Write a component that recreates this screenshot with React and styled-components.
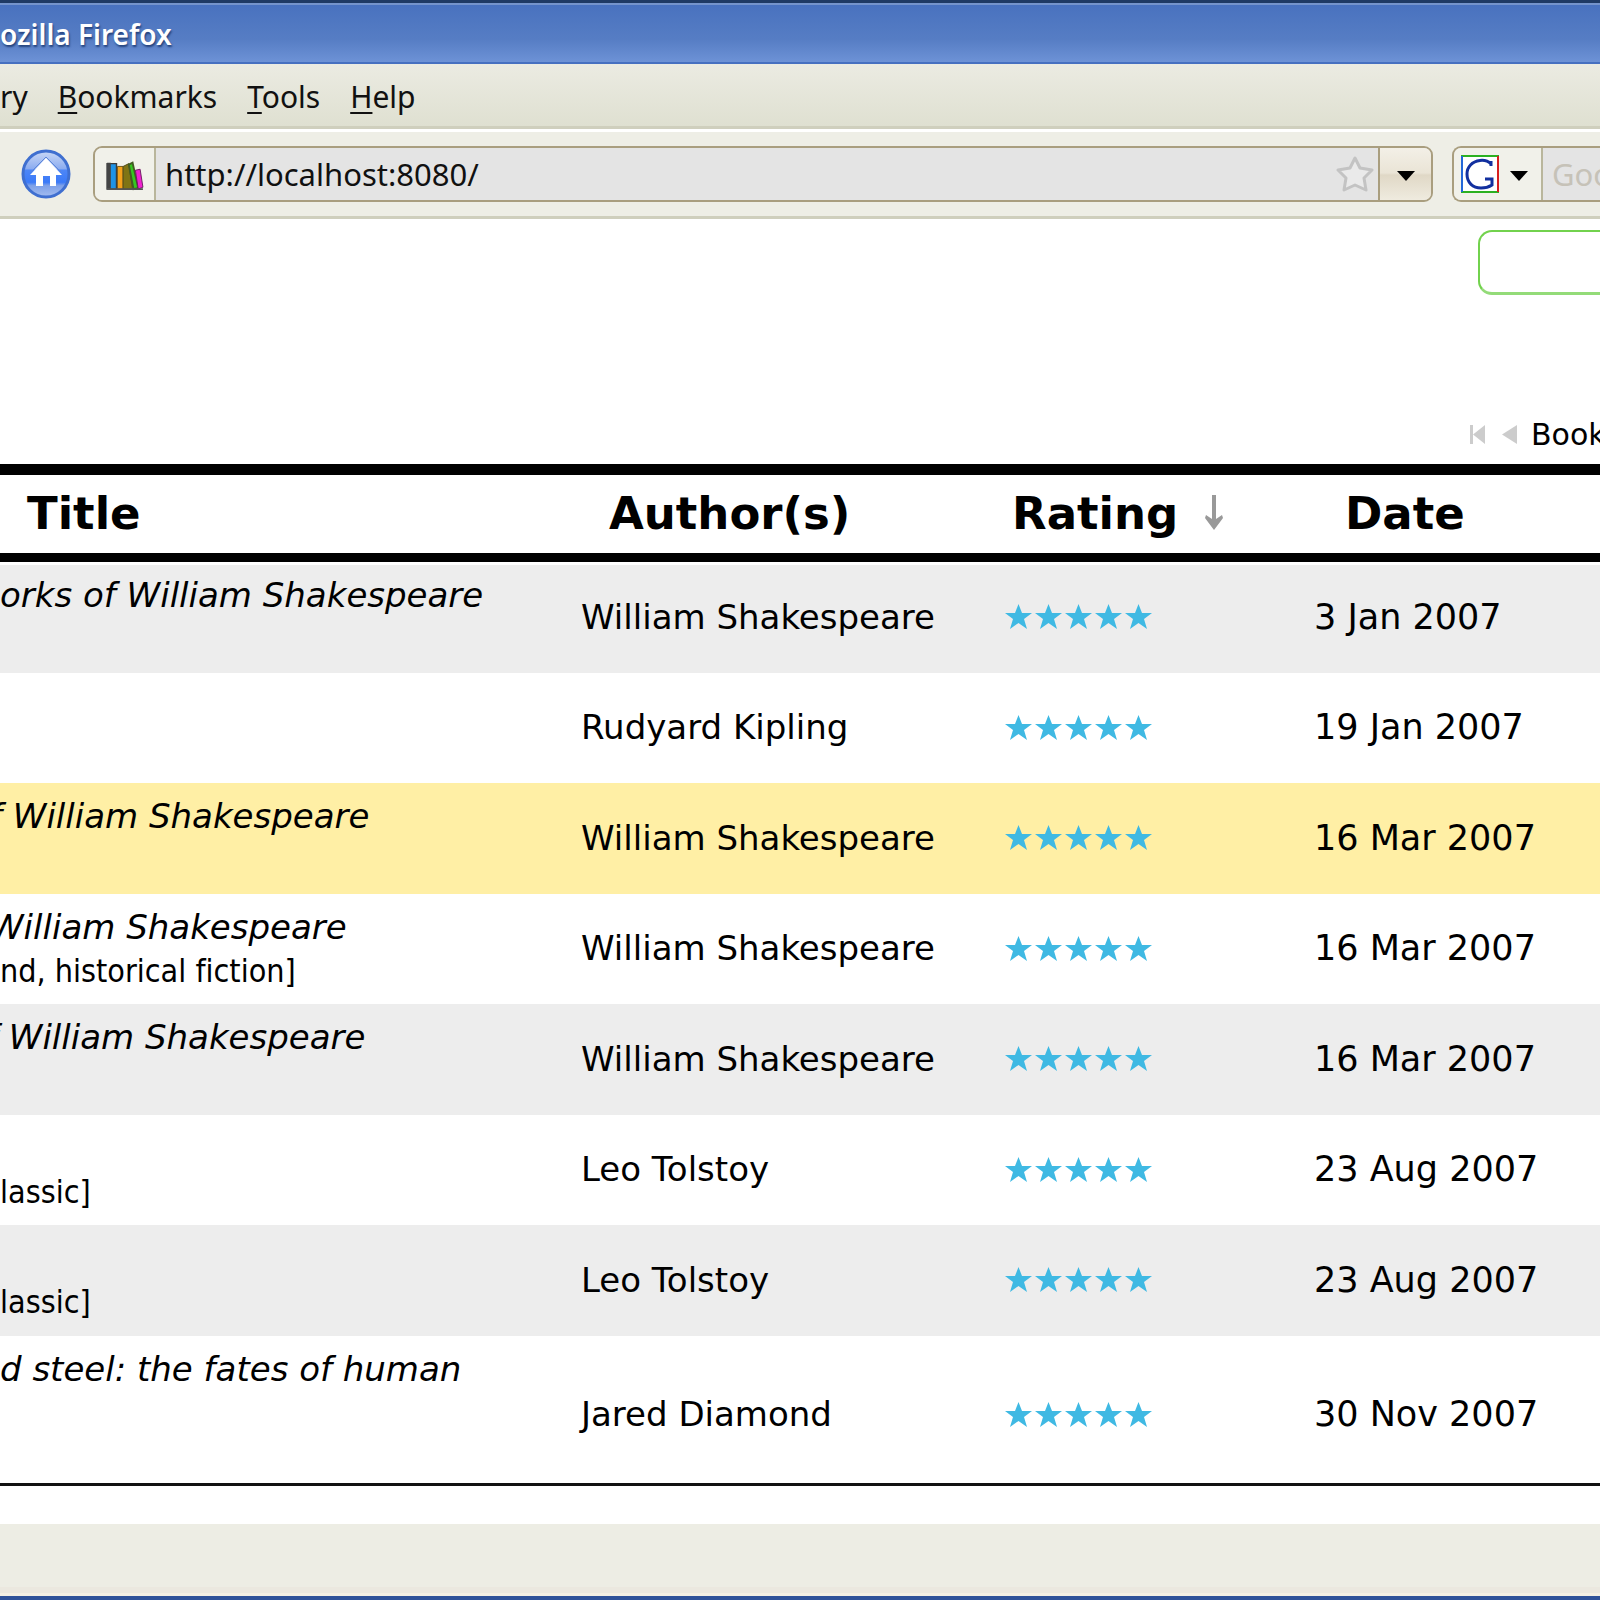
import React from 'react';
import styled, { createGlobalStyle } from 'styled-components';

const chromeFont = '"Noto Sans", "Open Sans", sans-serif';
const pageFont = '"DejaVu Sans", sans-serif';

//css
const GlobalStyle = createGlobalStyle`
    * { box-sizing: border-box; }
    body { margin: 0; background: #fff; }
    button {
        font: inherit;
        color: inherit;
        background: none;
        border: none;
        padding: 0;
        cursor: pointer;
    }
`;
const Window = styled.div`
    display: flex;
    flex-direction: column;
    min-height: 100vh;
    overflow: hidden;
    border-top: 3px solid #1f3a64;
    font-family: ${chromeFont};
    font-variant-ligatures: none;
    color: #111;
`;
const TitleBar = styled.header`
    display: flex;
    align-items: center;
    height: 61px;
    border-top: 2px solid #7594cb;
    border-bottom: 2px solid #4670c0;
    background: linear-gradient(#4972bf, #567dc4 60%, #6d92d6);
    color: #fff;
    font-size: 28px;
    font-weight: 600;
    white-space: nowrap;
    text-shadow: 1px 2px 2px #24427c;
`;
const MenuBar = styled.nav`
    display: flex;
    align-items: center;
    gap: 30px;
    height: 65px;
    padding-top: 4px;
    border-bottom: 3px solid #cfcfbd;
    background: linear-gradient(#ebebe2, #dfe0d1);
    font-size: 30px;
    line-height: 40px;
    u {
        text-decoration-thickness: 2px;
        text-underline-offset: 4px;
    }
`;
const Toolbar = styled.div`
    display: flex;
    align-items: center;
    height: 90px;
    border-top: 3px solid #fff;
    border-bottom: 3px solid #cfcfbd;
    background: #eeeee6;
`;
const HomeButton = styled.button`
    display: flex;
    margin: 0 22px 0 21px;
`;
const Field = styled.div`
    display: flex;
    flex: ${props => props.$grow ? "1 1 0" : "0 0 148px"};
    min-width: 0;
    height: 56px;
    margin-right: ${props => props.$grow ? 19 : 0}px;
    border: 2px solid #a99e7f;
    border-right-width: ${props => props.$grow ? 2 : 0}px;
    border-radius: ${props => props.$grow ? "9px" : "9px 0 0 9px"};
    background: #e4e4e4;
    overflow: hidden;
`;
const FieldIcon = styled.div`
    display: flex;
    align-items: center;
    justify-content: center;
    flex: 0 0 ${props => props.$width}px;
    border-right: 2px solid #b9b69c;
    background: #f1f1ea;
`;
const FieldInput = styled.input`
    flex: 1;
    min-width: 0;
    padding: 0 0 0 9px;
    border: none;
    outline: none;
    background: transparent;
    font-family: ${chromeFont};
    font-size: 31px;
    color: #111;
    &::placeholder { color: #c6c2b8; opacity: 1; }
`;
const StarButton = styled.button`
    display: flex;
    align-items: center;
    margin-right: 4px;
`;
const DropButton = styled.button`
    display: flex;
    align-items: center;
    justify-content: center;
    width: 53px;
    border-left: 2px solid #a99e7f;
    background: linear-gradient(#f3f0e7, #eae4d6 48%, #e0d8c6 52%, #efebdf);
`;
const EngineButton = styled.button`
    display: flex;
    align-items: center;
    gap: 11px;
    padding-right: 6px;
`;
const Page = styled.main`
    flex: 1;
    background: #fff;
    font-family: ${pageFont};
    color: #000;
`;
const PageTop = styled.div`
    display: flex;
    flex-direction: column;
    align-items: flex-end;
    padding-top: 11px;
`;
const SearchBox = styled.input`
    width: 122px;
    height: 65px;
    padding: 0 16px;
    border: 2px solid #72d24d;
    border-right: none;
    border-bottom: 3px solid #93db78;
    border-radius: 14px 0 0 14px;
    outline: none;
    background: #fff;
    font-family: ${pageFont};
    font-size: 30px;
`;
const Pager = styled.div`
    display: flex;
    align-items: center;
    gap: 14px;
    width: 130px;
    height: 36px;
    margin: 121px 0 12px;
    font-size: 30px;
    white-space: nowrap;
    button { display: flex; }
`;
const BookTable = styled.table`
    width: 100%;
    table-layout: fixed;
    border-collapse: separate;
    border-spacing: 0;
    border-bottom: 3px solid #111;
    margin-bottom: 38px;
    white-space: nowrap;
    font-size: 34px;
    line-height: 42px;
`;
const Col = styled.col`
    width: ${props => props.$width};
`;
const HeadCell = styled.th`
    height: 98px;
    padding: 0 0 0 ${props => props.$indent}px;
    border-top: 11px solid #000;
    border-bottom: 9px solid #000;
    text-align: left;
    font-size: 45px;
    font-weight: bold;
    button {
        display: flex;
        align-items: center;
        gap: 26px;
    }
`;
const Cell = styled.td`
    padding: 0 0 2px 12px;
    vertical-align: middle;
    font-size: ${props => props.$size || 34}px;
`;
const TitleCell = styled.td`
    padding: 12px 0 0;
    vertical-align: top;
`;
const Row = styled.tr`
    height: ${props => props.$tall ? 147 : 110}px;
    background: ${props => props.$color};
    &:nth-child(odd) { height: 111px; }
    &:first-child td { box-shadow: inset 0 3px #fff; }
    ${Cell} { padding-top: ${props => props.$tall ? 11 : 0}px; }
`;
const Title = styled.div`
    min-height: 44px;
    margin-left: -${props => props.$cut}px;
    font-style: italic;
`;
const Tags = styled.div`
    font-family: "DejaVu Sans Condensed", ${pageFont};
    font-size: 32px;
`;
const Stars = styled.div`
    display: flex;
    gap: 3px;
`;
const StatusBar = styled.footer`
    height: 77px;
    border-bottom: 5px solid #2f5299;
    background: linear-gradient(#edede4 63px, #ebe8df 63px, #ebe8df 69px, #f4f0e4 69px);
`;

//icons
const HomeIcon = () => (
    <svg width="50" height="50" viewBox="0 0 50 50">
        <defs>
            <linearGradient id="home" x1="0" y1="0" x2="0" y2="1">
                <stop offset="0" stopColor="#c9d8f6" />
                <stop offset="0.38" stopColor="#8dadf0" />
                <stop offset="0.42" stopColor="#4d86f7" />
                <stop offset="0.68" stopColor="#3b7af8" />
                <stop offset="0.75" stopColor="#7da0e8" />
                <stop offset="1" stopColor="#a4bdf0" />
            </linearGradient>
        </defs>
        <circle cx="25" cy="25" r="23" fill="url(#home)" stroke="#3f6fd0" strokeWidth="3" />
        <path d="M10 23 L25 8 L40 23" fill="none" stroke="#5d86d8" strokeWidth="1" />
        <path d="M25 9 L41 26 H35 V37 H29 V27 H22 V37 H15 V26 H9 Z" fill="#fff" />
    </svg>
);
const BooksIcon = () => (
    <svg width="38" height="34" viewBox="0 -4 40 36">
        <path d="M1 3 H11 V30 H1 Z" fill="#1f93e6" stroke="#3c3c3c" strokeWidth="1.5" />
        <path d="M1 2 H5 V30 H1 Z" fill="#444" />
        <path d="M12 6 H18 V30 H12 Z" fill="#f5a11b" stroke="#6b5416" strokeWidth="1" />
        <path d="M18 6 L24 3 L28 30 H18 Z" fill="#807414" stroke="#4f4a18" strokeWidth="1" />
        <path d="M24 4 L28 2 L34 29 L29 30 Z" fill="#36c721" stroke="#425c22" strokeWidth="2" />
        <path d="M31 10 L36 9 L39 28 L34 30 Z" fill="#f022d0" stroke="#6a1c60" strokeWidth="1" />
        <path d="M1 30 H39" stroke="#555" strokeWidth="2" />
    </svg>
);
const FavStarIcon = () => (
    <svg width="38" height="38" viewBox="0 0 38 38">
        <path d="M19 3 L24 13 L36 15 L28 23 L30 35 L19 30 L8 35 L10 23 L2 15 L14 13 Z"
            fill="#eaeaea" stroke="#c3c3c3" strokeWidth="3" strokeLinejoin="round" />
    </svg>
);
const DownIcon = () => (
    <svg width="18" height="14" viewBox="0 0 18 14"><path d="M0 4 H18 L9 14 Z" fill="#000" /></svg>
);
const GoogleIcon = () => (
    <svg width="38" height="38" viewBox="0 0 38 38">
        <rect width="38" height="38" fill="#fff" />
        <path d="M0 1 H38 M0 37 H38" stroke="#2bb121" strokeWidth="2" />
        <path d="M1 1 V37" stroke="#2367d8" strokeWidth="2" />
        <path d="M37 1 V37" stroke="#d61f1f" strokeWidth="2" />
        <path d="M30 11 V6 M30 9 C27 6 23 5 19 5.500 C11 6.500 6 12 6 19 C6 28 12 33 20 33 C25 33 28 32 31 30 V24 H24"
            fill="none" stroke="#12309f" strokeWidth="3" />
    </svg>
);
const FirstIcon = () => (
    <svg width="15" height="19" viewBox="0 0 15 19"><path d="M0 0 H3 V19 H0 Z M15 0 V19 L3 9.500 Z" fill="#ccc" /></svg>
);
const PrevIcon = () => (
    <svg width="18" height="19" viewBox="0 0 18 19"><path d="M18 0 V19 L3 9.500 Z" fill="#ccc" /></svg>
);
const SortIcon = () => (
    <svg width="20" height="38" viewBox="0 0 20 38">
        <path d="M8 0 H12 V24 L18 20 L19 23 L10 35 L1 23 L2 20 L8 24 Z" fill="#999" />
    </svg>
);
const StarIcon = () => (
    <svg width="27" height="25" viewBox="0 0 27 25">
        <path d="M13.500 0 L17 9 H27 L19 15 L22 25 L13.500 19 L5 25 L8 15 L0 9 H10 Z" fill="#3fb9e3" />
    </svg>
);

const menus = ["Bookmarks", "Tools", "Help"];
const columns = [
    { name: "Title", indent: 27, width: "569px" },
    { name: "Author(s)", indent: 40, width: "424px" },
    { name: "Rating", indent: 19, width: "309px", sorted: true },
    { name: "Date", indent: 43, width: "auto" },
];
// cut: how much of the title's first letter is past the left edge of the window
const books = [
    { title: "orks of William Shakespeare", cut: 0, author: "William Shakespeare", date: "3 Jan 2007", color: "#ededed" },
    { title: "", cut: 0, author: "Rudyard Kipling", date: "19 Jan 2007", color: "#fff" },
    { title: "f William Shakespeare", cut: 10, author: "William Shakespeare", date: "16 Mar 2007", color: "#ffefa5" },
    { title: "William Shakespeare", cut: 10, tags: "nd, historical fiction]", author: "William Shakespeare", date: "16 Mar 2007", color: "#fff" },
    { title: "f William Shakespeare", cut: 14, author: "William Shakespeare", date: "16 Mar 2007", color: "#ededed" },
    { title: "", cut: 0, tags: "lassic]", author: "Leo Tolstoy", date: "23 Aug 2007", color: "#fff" },
    { title: "", cut: 0, tags: "lassic]", author: "Leo Tolstoy", date: "23 Aug 2007", color: "#ededed" },
    { title: "d steel: the fates of human", cut: 0, author: "Jared Diamond", date: "30 Nov 2007", color: "#fff", tall: true },
];

const Rating = ({ count }) => (
    <Stars role="img" aria-label={`${count} stars`}>
        {Array.from({ length: count }, (_, i) => <StarIcon key={i} />)}
    </Stars>
);

const Books = () => (
    <BookTable>
        <colgroup>
            {columns.map(col => <Col key={col.name} $width={col.width} />)}
        </colgroup>
        <thead>
            <tr>
                {columns.map(col => (
                    <HeadCell key={col.name} $indent={col.indent}>
                        <button type="button">{col.name}{col.sorted && <SortIcon />}</button>
                    </HeadCell>
                ))}
            </tr>
        </thead>
        <tbody>
            {books.map((book, i) => (
                <Row key={i} $color={book.color} $tall={book.tall}>
                    <TitleCell>
                        <Title $cut={book.cut}>{book.title}</Title>
                        {book.tags && <Tags>{book.tags}</Tags>}
                    </TitleCell>
                    <Cell>{book.author}</Cell>
                    <Cell><Rating count={5} /></Cell>
                    <Cell $size={35}>{book.date}</Cell>
                </Row>
            ))}
        </tbody>
    </BookTable>
);

const App = () => (
    <>
        <GlobalStyle />
        <Window>
            <TitleBar>ozilla Firefox</TitleBar>
            <MenuBar>
                <button type="button">ry</button>
                {menus.map(name => (
                    <button type="button" key={name}><u>{name[0]}</u>{name.slice(1)}</button>
                ))}
            </MenuBar>
            <Toolbar>
                <HomeButton type="button" aria-label="Home"><HomeIcon /></HomeButton>
                <Field $grow>
                    <FieldIcon $width={61}><BooksIcon /></FieldIcon>
                    <FieldInput aria-label="Address" defaultValue="http://localhost:8080/" />
                    <StarButton type="button" aria-label="Bookmark this page"><FavStarIcon /></StarButton>
                    <DropButton type="button" aria-label="Show history"><DownIcon /></DropButton>
                </Field>
                <Field>
                    <FieldIcon $width={89}>
                        <EngineButton type="button" aria-label="Search engine"><GoogleIcon /><DownIcon /></EngineButton>
                    </FieldIcon>
                    <FieldInput aria-label="Web search" placeholder="Google" />
                </Field>
            </Toolbar>
            <Page>
                <PageTop>
                    <SearchBox aria-label="Search books" />
                    <Pager>
                        <button type="button" aria-label="First page"><FirstIcon /></button>
                        <button type="button" aria-label="Previous page"><PrevIcon /></button>
                        Book
                    </Pager>
                </PageTop>
                <Books />
            </Page>
            <StatusBar />
        </Window>
    </>
);

export default App;
